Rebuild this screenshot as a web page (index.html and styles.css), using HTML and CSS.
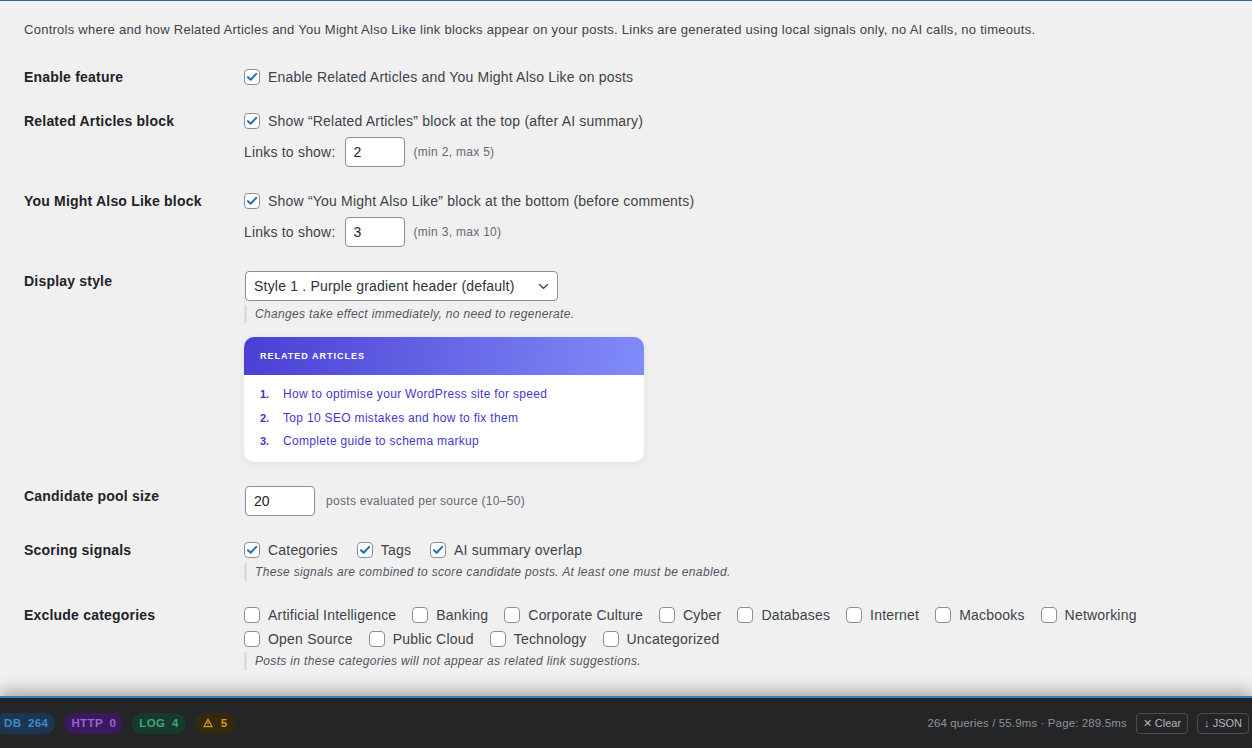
FILE: index.html
```html
<!DOCTYPE html>
<html lang="en">
<head>
    <meta charset="UTF-8">
    <meta name="viewport" content="width=device-width, initial-scale=1.0">
    <title>Related Links Settings</title>
    <link rel="stylesheet" href="styles.css">
</head>
<body>

    <div class="page">
        <p class="intro">Controls where and how Related Articles and You Might Also Like link blocks appear on your posts. Links are generated using local signals only, no AI calls, no timeouts.</p>

        <div class="row">
            <div class="label">Enable feature</div>
            <div class="field">
                <label class="check"><input type="checkbox" checked><span class="box"><svg viewBox="0 0 16 16"><path d="M3.4 8.2 L6.5 11.2 L12.8 4.4"/></svg></span>Enable Related Articles and You Might Also Like on posts</label>
            </div>
        </div>

        <div class="row">
            <div class="label">Related Articles block</div>
            <div class="field">
                <label class="check"><input type="checkbox" checked><span class="box"><svg viewBox="0 0 16 16"><path d="M3.4 8.2 L6.5 11.2 L12.8 4.4"/></svg></span>Show “Related Articles” block at the top (after AI summary)</label>
                <div class="count">
                    Links to show:
                    <input type="text" class="num" value="2">
                    <span class="hint">(min 2, max 5)</span>
                </div>
            </div>
        </div>

        <div class="row">
            <div class="label">You Might Also Like block</div>
            <div class="field">
                <label class="check"><input type="checkbox" checked><span class="box"><svg viewBox="0 0 16 16"><path d="M3.4 8.2 L6.5 11.2 L12.8 4.4"/></svg></span>Show “You Might Also Like” block at the bottom (before comments)</label>
                <div class="count">
                    Links to show:
                    <input type="text" class="num" value="3">
                    <span class="hint">(min 3, max 10)</span>
                </div>
            </div>
        </div>

        <div class="row">
            <div class="label">Display style</div>
            <div class="field">
                <div class="select-wrap">
                    <select class="select">
                        <option>Style 1 . Purple gradient header (default)</option>
                    </select>
                    <svg class="chevron" viewBox="0 0 12 8"><path d="M1 1.5 L6 6 L11 1.5"/></svg>
                </div>
                <p class="desc">Changes take effect immediately, no need to regenerate.</p>

                <div class="preview">
                    <div class="preview-head">RELATED ARTICLES</div>
                    <ol class="preview-list">
                        <li><span class="n">1.</span>How to optimise your WordPress site for speed</li>
                        <li><span class="n">2.</span>Top 10 SEO mistakes and how to fix them</li>
                        <li><span class="n">3.</span>Complete guide to schema markup</li>
                    </ol>
                </div>
            </div>
        </div>

        <div class="row">
            <div class="label">Candidate pool size</div>
            <div class="field inline">
                <input type="text" class="num wide" value="20">
                <span class="hint">posts evaluated per source (10–50)</span>
            </div>
        </div>

        <div class="row">
            <div class="label">Scoring signals</div>
            <div class="field">
                <div class="checks signals">
                    <label class="check"><input type="checkbox" checked><span class="box"><svg viewBox="0 0 16 16"><path d="M3.4 8.2 L6.5 11.2 L12.8 4.4"/></svg></span>Categories</label>
                    <label class="check"><input type="checkbox" checked><span class="box"><svg viewBox="0 0 16 16"><path d="M3.4 8.2 L6.5 11.2 L12.8 4.4"/></svg></span>Tags</label>
                    <label class="check"><input type="checkbox" checked><span class="box"><svg viewBox="0 0 16 16"><path d="M3.4 8.2 L6.5 11.2 L12.8 4.4"/></svg></span>AI summary overlap</label>
                </div>
                <p class="desc tight">These signals are combined to score candidate posts. At least one must be enabled.</p>
            </div>
        </div>

        <div class="row">
            <div class="label">Exclude categories</div>
            <div class="field">
                <div class="checks cats">
                    <label class="check"><input type="checkbox"><span class="box"></span>Artificial Intelligence</label>
                    <label class="check"><input type="checkbox"><span class="box"></span>Banking</label>
                    <label class="check"><input type="checkbox"><span class="box"></span>Corporate Culture</label>
                    <label class="check"><input type="checkbox"><span class="box"></span>Cyber</label>
                    <label class="check"><input type="checkbox"><span class="box"></span>Databases</label>
                    <label class="check"><input type="checkbox"><span class="box"></span>Internet</label>
                    <label class="check"><input type="checkbox"><span class="box"></span>Macbooks</label>
                    <label class="check"><input type="checkbox"><span class="box"></span>Networking</label>
                    <label class="check"><input type="checkbox"><span class="box"></span>Open Source</label>
                    <label class="check"><input type="checkbox"><span class="box"></span>Public Cloud</label>
                    <label class="check"><input type="checkbox"><span class="box"></span>Technology</label>
                    <label class="check"><input type="checkbox"><span class="box"></span>Uncategorized</label>
                </div>
                <p class="desc tight">Posts in these categories will not appear as related link suggestions.</p>
            </div>
        </div>
    </div>

    <div class="debugbar">
        <div class="pills">
            <span class="pill db">DB 264</span>
            <span class="pill http">HTTP 0</span>
            <span class="pill log">LOG 4</span>
            <span class="pill warn"><svg viewBox="0 0 12 12"><path d="M6 1.4 L11 10.4 H1 Z"/><path d="M6 4.8 V7.2 M6 8.4 V8.9"/></svg>5</span>
        </div>
        <div class="stats">
            <span class="timing">264 queries / 55.9ms · Page: 289.5ms</span>
            <button class="dbg-btn">✕ Clear</button>
            <button class="dbg-btn">↓ JSON</button>
        </div>
    </div>

</body>
</html>
```

FILE: styles.css
```css
body {
    margin: 0;
    height: 100vh;
    display: flex;
    flex-direction: column;
    overflow: hidden;
    background-color: #f0f0f1;
    color: #3c434a;
    font-family: "Liberation Sans", Arial, sans-serif;
    font-size: 14px;
    letter-spacing: 0.2px;
}

.page {
    flex: 1;
    overflow: hidden;
    border-top: 1px solid #2a6c8b;
    padding: 0 24px;
}

.intro {
    margin: 19px 0 15px;
    font-size: 13px;
    line-height: 20px;
    letter-spacing: 0.26px;
    color: #3c434a;
}

.row {
    display: grid;
    grid-template-columns: 220px 1fr;
    padding: 12px 0;
}

.label {
    font-weight: bold;
    color: #1d2327;
    line-height: 20px;
}

.field.inline {
    display: flex;
    align-items: center;
}

/* checkboxes */
.check {
    display: inline-flex;
    align-items: center;
    line-height: 20px;
    color: #3c434a;
}

.check input {
    display: none;
}

.box {
    width: 14px;
    height: 14px;
    border: 1px solid #8c8f94;
    border-radius: 4px;
    background-color: #fff;
    margin: 0 8px 0 0;
    display: inline-flex;
    align-items: center;
    justify-content: center;
}

.box svg {
    width: 14px;
    height: 14px;
    fill: none;
    stroke: #2271b1;
    stroke-width: 2.3;
    stroke-linecap: round;
    stroke-linejoin: round;
}

.checks {
    display: flex;
    flex-wrap: wrap;
    row-gap: 4px;
}

.signals .check {
    margin-right: 19px;
}

.cats .check {
    margin-right: 16px;
}

/* number inputs */
.count {
    display: flex;
    align-items: center;
    margin-top: 6px;
    color: #3c434a;
}

.num {
    width: 60px;
    height: 30px;
    box-sizing: border-box;
    margin: 0 9px 0 9px;
    padding: 0 8px;
    border: 1px solid #8c8f94;
    border-radius: 4px;
    background-color: #fff;
    color: #1d2327;
    font-family: inherit;
    font-size: 14px;
}

.num.wide {
    width: 70px;
    margin: 0 11px 0 1px;
}

.hint {
    font-size: 12px;
    letter-spacing: 0.3px;
    color: #646970;
}

/* select */
.select-wrap {
    position: relative;
    width: 313px;
    margin-left: 1px;
}

.select {
    width: 100%;
    height: 30px;
    padding: 0 30px 0 8px;
    border: 1px solid #8c8f94;
    border-radius: 4px;
    background-color: #fff;
    color: #2c3338;
    font-family: inherit;
    font-size: 14px;
    letter-spacing: 0.2px;
    appearance: none;
    -webkit-appearance: none;
}

.chevron {
    position: absolute;
    right: 9px;
    top: 12px;
    width: 11px;
    height: 7px;
    fill: none;
    stroke: #3c434a;
    stroke-width: 1.5;
    pointer-events: none;
}

.desc {
    margin: 4px 0 0;
    padding: 1px 0 1px 8px;
    border-left: 3px solid #dcdcde;
    font-size: 12px;
    line-height: 16px;
    letter-spacing: 0.33px;
    font-style: italic;
    color: #50575e;
}

.desc.tight {
    margin-top: 3px;
}

/* preview card */
.preview {
    width: 400px;
    margin-top: 14px;
    border-radius: 10px;
    background-color: #fff;
    box-shadow: 0 2px 8px rgba(0, 0, 0, 0.07);
    overflow: hidden;
}

.preview-head {
    height: 38px;
    display: flex;
    align-items: center;
    padding: 0 16px;
    background: linear-gradient(100deg, #4a3fd4, #818cf8);
    color: #fff;
    font-size: 9px;
    font-weight: bold;
    letter-spacing: 1px;
}

.preview-list {
    list-style: none;
    margin: 0;
    padding: 8px 16px 8px;
}

.preview-list li {
    line-height: 23.5px;
    font-size: 12px;
    letter-spacing: 0.32px;
    color: #4338ca;
}

.preview-list .n {
    display: inline-block;
    width: 23px;
    font-size: 11px;
    font-weight: bold;
    letter-spacing: 0;
    color: #3f37b8;
}

/* debug toolbar */
.debugbar {
    height: 50px;
    flex-shrink: 0;
    display: flex;
    align-items: center;
    justify-content: space-between;
    background-color: #242526;
    border-top: 2px solid #3280c0;
    box-shadow: 0 -6px 14px rgba(0, 0, 0, 0.28);
    padding-right: 3px;
}

.pills {
    display: flex;
    align-items: center;
    gap: 9px;
    margin-left: -6px;
}

.pill {
    display: inline-flex;
    align-items: center;
    height: 21px;
    padding: 0 7px;
    border-radius: 11px;
    font-size: 11.5px;
    font-weight: bold;
    letter-spacing: 0.4px;
    word-spacing: 3px;
}

.pill.db {
    background-color: #1c3550;
    color: #4289cb;
    padding-left: 10px;
}

.pill.http {
    background-color: #3a1a5c;
    color: #9b62d8;
}

.pill.log {
    background-color: #173a2c;
    color: #3aa978;
}

.pill.warn {
    background-color: #33290f;
    color: #d8981b;
    padding: 0 8px;
    gap: 8px;
}

.pill.warn svg {
    width: 10px;
    height: 10px;
    fill: none;
    stroke: #d8981b;
    stroke-width: 1.4;
    stroke-linejoin: round;
}

.stats {
    display: flex;
    align-items: center;
    gap: 9px;
}

.timing {
    font-size: 11.5px;
    letter-spacing: 0.12px;
    color: #8f9399;
}

.dbg-btn {
    height: 21px;
    padding: 0 6px;
    background-color: transparent;
    border: 1px solid #4b4d51;
    border-radius: 4px;
    color: #b4b7bb;
    font-family: inherit;
    font-size: 11px;
    cursor: pointer;
}
```
